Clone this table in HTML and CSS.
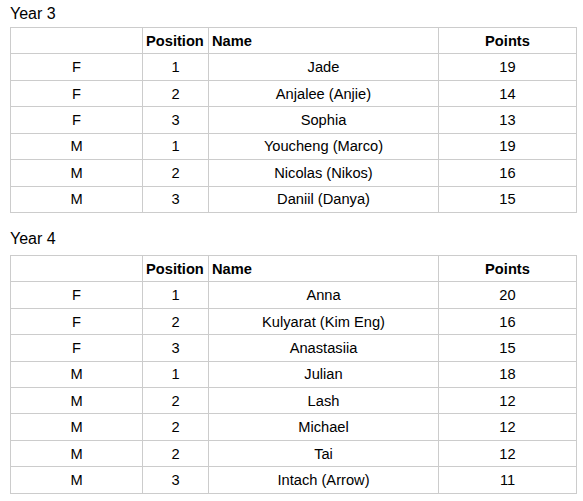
FILE: index.html
```html
<!DOCTYPE html>
<html>
<head>
<meta charset="utf-8">
<link rel="stylesheet" href="styles.css">
</head>
<body>
<section class="group first">
  <div class="label">Year 3</div>
  <table class="results">
    <colgroup><col class="c1"><col class="c2"><col class="c3"><col class="c4"></colgroup>
    <tr class="head"><td></td><td class="left">Position</td><td class="left">Name</td><td>Points</td></tr>
    <tr><td>F</td><td>1</td><td>Jade</td><td>19</td></tr>
    <tr><td>F</td><td>2</td><td>Anjalee (Anjie)</td><td>14</td></tr>
    <tr><td>F</td><td>3</td><td>Sophia</td><td>13</td></tr>
    <tr><td>M</td><td>1</td><td>Youcheng (Marco)</td><td>19</td></tr>
    <tr><td>M</td><td>2</td><td>Nicolas (Nikos)</td><td>16</td></tr>
    <tr><td>M</td><td>3</td><td>Daniil (Danya)</td><td>15</td></tr>
  </table>
</section>
<section class="group second">
  <div class="label">Year 4</div>
  <table class="results">
    <colgroup><col class="c1"><col class="c2"><col class="c3"><col class="c4"></colgroup>
    <tr class="head"><td></td><td class="left">Position</td><td class="left">Name</td><td>Points</td></tr>
    <tr><td>F</td><td>1</td><td>Anna</td><td>20</td></tr>
    <tr><td>F</td><td>2</td><td>Kulyarat (Kim Eng)</td><td>16</td></tr>
    <tr><td>F</td><td>3</td><td>Anastasiia</td><td>15</td></tr>
    <tr><td>M</td><td>1</td><td>Julian</td><td>18</td></tr>
    <tr><td>M</td><td>2</td><td>Lash</td><td>12</td></tr>
    <tr><td>M</td><td>2</td><td>Michael</td><td>12</td></tr>
    <tr><td>M</td><td>2</td><td>Tai</td><td>12</td></tr>
    <tr><td>M</td><td>3</td><td>Intach (Arrow)</td><td>11</td></tr>
  </table>
</section>
</body>
</html>
```

FILE: styles.css
```css
html, body {
  margin: 0;
  background: #ffffff;
}
body {
  padding: 2px 0 0 10px;
  font-family: "Liberation Sans", Arial, sans-serif;
  color: #000000;
}
.label {
  font-size: 16px;
  line-height: 24px;
  margin-bottom: 1px;
}
.second {
  margin-top: 14px;
}
.second .label {
  margin-bottom: 4px;
}
.results {
  border-collapse: collapse;
  table-layout: fixed;
  width: 566px;
  font-size: 14.67px;
}
.c1 { width: 132px; }
.c2 { width: 66px; }
.c3 { width: 230px; }
.c4 { width: 138px; }
.results tr {
  height: 26.43px;
}
.results td {
  border: 1px solid #cccccc;
  padding: 0 3px;
  text-align: center;
  vertical-align: middle;
  white-space: nowrap;
  line-height: 16px;
}
.results td.left {
  text-align: left;
}
.head td {
  font-weight: bold;
}
```
